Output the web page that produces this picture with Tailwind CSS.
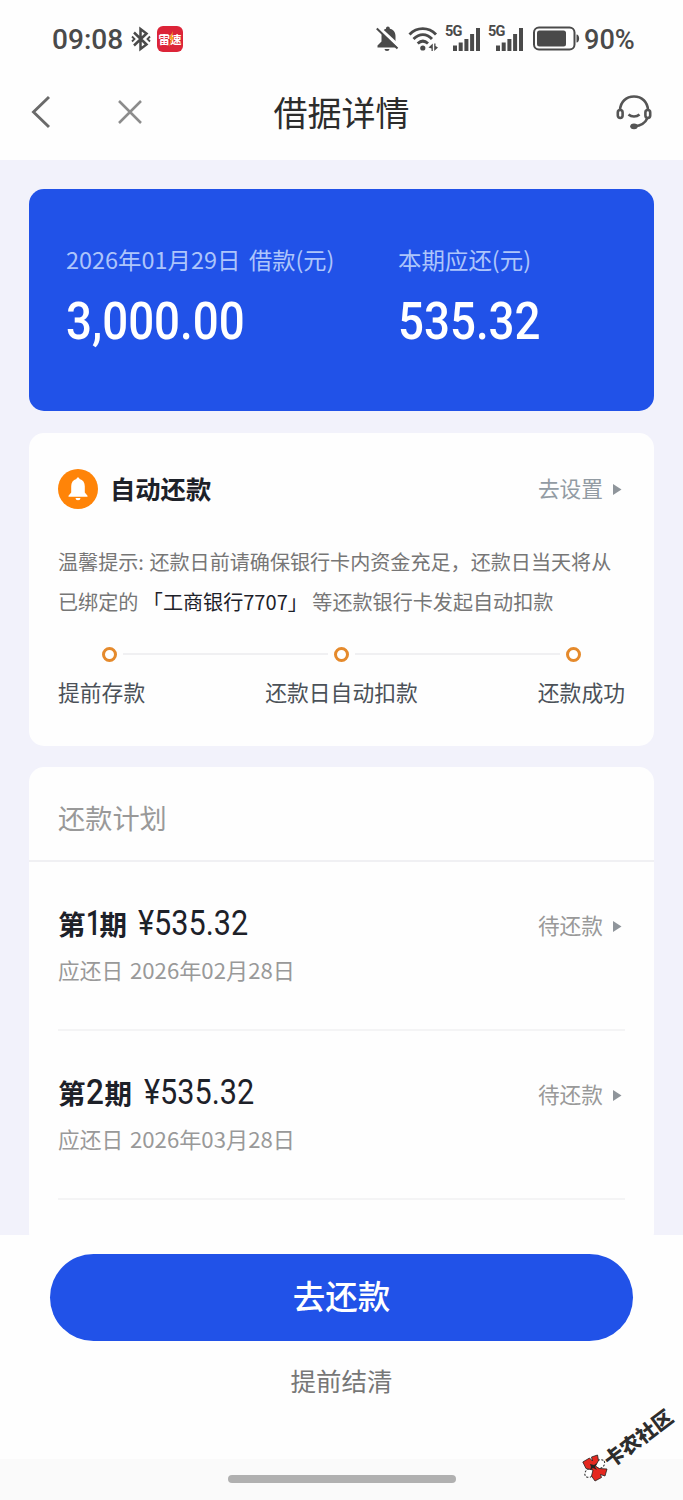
<!DOCTYPE html>
<html lang="zh-CN">
<head>
<meta charset="utf-8">
<title>借据详情</title>
<script src="https://cdn.jsdelivr.net/npm/@tailwindcss/browser@4"></script>
</head>
<body class="w-[683px] h-[1500px] overflow-hidden bg-[#f2f2fb] font-['Noto_Sans_CJK_SC',sans-serif] relative flex flex-col whitespace-nowrap">
<header class="h-[160px] shrink-0 bg-[#fefefe] flex flex-col text-[#4a4a4a]">
  <div class="h-[78px] shrink-0 flex items-center pl-[52px]">
    <span class="w-[79px] h-[30px] leading-[31px] text-[27.5px] font-medium font-['Roboto',sans-serif]"><span class="inline-block origin-left scale-x-[1.02]">09:08</span></span>
    <svg class="w-[20px] h-[26px]" viewBox="0 0 20 26" fill="none" stroke="#4a4a4a" stroke-width="2.5"><path d="M3 6.500 15.500 18.500 9.500 23V3L15.500 7.500 3 19.500"/><path d="M1 10.500l2.500 2.500-2.500 2.500M19 10.500l-2.500 2.500 2.500 2.500" stroke-width="1.800"/></svg>
    <div class="ml-[6px] w-[26px] h-[26px] rounded-[6px] bg-[#dc2438] text-white text-[11.5px] font-bold leading-[26px] flex justify-center relative">雷速
      <svg class="absolute left-[11px] top-[5px] w-[7px] h-[16px]" viewBox="0 0 7 16"><path d="M5 0 1 8h2L1 16 6 6H4z" fill="#f5a623"/></svg>
    </div>
    <svg class="ml-[193px] w-[24px] h-[28px]" viewBox="0 0 24 28"><path d="M1.500 22.500v-2l4-4V11C5.500 7 7.500 4.500 10 3.800V3.300a1.900 1.900 0 0 1 3.800 0v.5C17 4.500 19.500 7 19.500 11v6l2.500 3v2.500z" fill="#4a4a4a"/><path d="M8.500 24h5a2.500 2 0 0 1-5 0z" fill="#4a4a4a"/><path d="M2.500 2.500 23.500 22" stroke="#fefefe" stroke-width="3.500"/><path d="M.8 3.500 21.500 23.500" stroke="#4a4a4a" stroke-width="2"/></svg>
    <svg class="ml-[8px] w-[30px] h-[26px]" viewBox="0 0 30 26" fill="none" stroke="#4a4a4a" stroke-width="2.900"><path d="M1.500 8.500C9 .7 20.500.7 28 8.500"/><path d="M5.500 13C11.500 7.200 18.500 7.200 24 13"/><path d="M9.700 17.500C13 14.500 16.800 14.500 20 17.500"/><circle cx="14.800" cy="22" r="2.600" fill="#4a4a4a" stroke="none"/><path d="M24.800 17.500v7.500h-1.300v-2.500L20.500 21.500zM26.200 25v-7.500h1.300v2.500L30 21.500z" fill="#4a4a4a" stroke="none"/></svg>
    <div class="ml-[7px] w-[37px] h-[26px] relative">
      <span class="absolute left-0 top-[-1px] text-[14.5px] leading-[14px] font-bold font-['Roboto',sans-serif] tracking-[-0.8px]">5G</span>
      <svg class="w-full h-full" viewBox="0 0 37 26" fill="#4a4a4a"><path d="M8 19.500h4V25H8zM13.700 16.500h4V25h-4zM19.400 13h4v12h-4zM25.100 8h4v17h-4zM31 2h4v23h-4z"/></svg>
    </div>
    <div class="ml-[6px] w-[37px] h-[26px] relative">
      <span class="absolute left-0 top-[-1px] text-[14.5px] leading-[14px] font-bold font-['Roboto',sans-serif] tracking-[-0.8px]">5G</span>
      <svg class="w-full h-full" viewBox="0 0 37 26" fill="#4a4a4a"><path d="M8 19.500h4V25H8zM13.700 16.500h4V25h-4zM19.400 13h4v12h-4zM25.100 8h4v17h-4zM31 2h4v23h-4z"/></svg>
    </div>
    <svg class="ml-[8px] w-[48px] h-[26px]" viewBox="0 0 48 26"><rect x="1" y="1.500" width="40.500" height="22" rx="5" fill="none" stroke="#4a4a4a" stroke-width="2"/><rect x="4" y="4.500" width="29" height="16" rx="2.500" fill="#4a4a4a"/><path d="M43.500 8.500c3.500 0 3.500 8 0 8z" fill="#4a4a4a"/></svg>
    <span class="ml-[3px] h-[30px] leading-[31px] text-[27.500px] font-medium font-['Roboto',sans-serif]"><span class="inline-block origin-left scale-x-[0.985]">90%</span></span>
  </div>
  <div class="h-[68px] flex items-center justify-between relative">
    <div class="flex items-center pl-[30px]">
      <svg class="w-[22px] h-[34px]" viewBox="0 0 22 34" fill="none" stroke="#6a6a6a" stroke-width="2.900"><path d="M19 2 3.500 17 19 32"/></svg>
      <svg class="ml-[66px] w-[24px] h-[24px]" viewBox="0 0 24 24" fill="none" stroke="#8c8c8c" stroke-width="2.500"><path d="M1 1l22 22M23 1 1 23"/></svg>
    </div>
    <h1 class="absolute left-0 right-0 text-center text-[34px] leading-[48px] text-[#2c2c2c]">借据详情</h1>
    <svg class="mr-[31px] w-[36px] h-[36px]" viewBox="0 0 36 36" fill="none" stroke="#555" stroke-width="2.600"><path d="M4 16C4.500 8 10 2.500 18 2.500S31.500 8 32 16"/><rect x="1.800" y="16" width="4.800" height="8" rx="2.400"/><rect x="29.400" y="16" width="4.800" height="8" rx="2.400"/><path d="M12.500 20.500c3 2.600 8 2.600 11 0M31.500 24C29 29.500 25 31.800 18.500 32.300"/><ellipse cx="18" cy="32.300" rx="3.800" ry="2.900" fill="#555" stroke="none"/></svg>
  </div>
</header>

<main class="h-[1075px] shrink-0 overflow-hidden px-[29px] pt-[29px] flex flex-col">
  <section class="h-[222px] w-[625px] shrink-0 rounded-[15px] bg-[#2152e8] flex pl-[37px] pt-[53px]">
    <div class="w-[332px]">
      <p class="text-[23px] leading-[34px] text-[#adc5fb] flex"><span class="w-[183px]"><span class="inline-block origin-left scale-x-[1.020]">2026年01月29日</span></span><span class="inline-block origin-left scale-x-[1.010]">借款(元)</span></p>
      <p class="mt-[13px] text-[52.500px] leading-[64px] font-medium text-white font-['Roboto',sans-serif]"><span class="inline-block origin-left scale-x-[0.870]">3,000.00</span></p>
    </div>
    <div>
      <p class="text-[23px] leading-[34px] text-[#adc5fb]"><span class="inline-block origin-left scale-x-[1.020]">本期应还(元)</span></p>
      <p class="mt-[13px] text-[52.500px] leading-[64px] font-medium text-white font-['Roboto',sans-serif]"><span class="inline-block origin-left scale-x-[0.870]">535.32</span></p>
    </div>
  </section>

  <section class="mt-[22px] h-[313px] w-[625px] shrink-0 rounded-[15px] bg-[#fefefe] pt-[36px] px-[29px]">
    <div class="flex items-center h-[40px]">
      <svg class="w-[40px] h-[40px]" viewBox="0 0 40 40"><circle cx="20" cy="20" r="20" fill="#ff8408"/><path d="M20 8.500c.9 0 1.400.6 1.600 1.600 3.400.8 5.200 3.500 5.200 7.200v6.200l2.700 3.300v1H10.500v-1l2.700-3.300v-6.200c0-3.700 1.800-6.400 5.200-7.200.2-1 .7-1.600 1.600-1.600z" fill="#fff"/><path d="M17.500 29h5a2.500 2.200 0 0 1-5 0z" fill="#fff"/></svg>
      <h2 class="ml-[12px] pb-[2px] text-[25.300px] leading-[36px] font-bold text-[#1d2129]">自动还款</h2>
      <span class="ml-auto pb-[2px] text-[21.700px] leading-[30px] text-[#929ba3]">去设置</span>
      <svg class="ml-[10px] mr-[3px] w-[9px] h-[11px]" viewBox="0 0 9 11"><path d="M0 0v11l8.500-5.500z" fill="#8f959b"/></svg>
    </div>
    <p class="mt-[33px] text-[20.080px] leading-[40px] text-[#767676]">温馨提示: <span class="ml-[1px]">还款日前请确保银行卡内资金充足，还款日当天将从</span><br>已绑定的 <span class="text-[#1d2129]">「工商银行7707」</span> 等还款银行卡发起自动扣款</p>
    <div class="mt-[25px] h-[14px] flex items-center pl-[44px] pr-[44px]">
      <i class="w-[15px] h-[15px] rounded-full border-[3px] border-[#e58a2c] bg-white"></i>
      <i class="h-[2px] flex-1 mx-[6px] bg-[#f0f0f2]"></i>
      <i class="w-[15px] h-[15px] rounded-full border-[3px] border-[#e58a2c] bg-white"></i>
      <i class="h-[2px] flex-1 mx-[6px] bg-[#f0f0f2]"></i>
      <i class="w-[15px] h-[15px] rounded-full border-[3px] border-[#e58a2c] bg-white"></i>
    </div>
    <div class="mt-[15px] flex justify-between text-[21.800px] leading-[32px] text-[#4b5158]"><span>提前存款</span><span>还款日自动扣款</span><span>还款成功</span></div>
  </section>

  <section class="mt-[21px] h-[480px] w-[625px] shrink-0 rounded-[15px] bg-[#fefefe]">
    <div class="h-[95px] border-b-2 border-[#f0f0f3] pl-[29px] pt-[31px]"><h2 class="text-[27.200px] leading-[39px] text-[#999]">还款计划</h2></div>
    <div class="mx-[29px] h-[169px] border-b-2 border-[#f4f4f5] flex justify-between pt-[40px]">
      <div>
        <p class="h-[42px] leading-[44px] text-[#1d2129] flex"><span class="w-[80px] flex text-[27.500px] leading-[42px]"><b>第</b><span class="w-[14px] pt-px text-[35px] font-medium font-['Roboto',sans-serif]"><span class="inline-block origin-left scale-x-[0.750]">1</span></span><b>期</b></span><span class="font-['Roboto',sans-serif] text-[35px]"><span class="inline-block origin-left scale-x-[0.875]">¥535.32</span></span></p>
        <p class="mt-[10px] text-[21.700px] leading-[32px] text-[#999] flex"><span class="w-[72px]">应还日</span><span class="inline-block origin-left scale-x-[1.022]">2026年02月28日</span></p>
      </div>
      <div class="flex items-center h-[48px] text-[21.700px] leading-[30px] text-[#999]"><span class="pb-[2px]">待还款</span><svg class="ml-[10px] mr-[3px] w-[9px] h-[11px]" viewBox="0 0 9 11"><path d="M0 0v11l8.500-5.500z" fill="#8f959b"/></svg></div>
    </div>
    <div class="mx-[29px] h-[169px] border-b-2 border-[#f4f4f5] flex justify-between pt-[40px]">
      <div>
        <p class="h-[42px] leading-[44px] text-[#1d2129] flex"><span class="w-[86px] flex text-[27.500px] leading-[42px]"><b>第</b><span class="w-[19px] pt-px text-[35px] font-medium font-['Roboto',sans-serif]"><span class="inline-block origin-left scale-x-[0.900]">2</span></span><b>期</b></span><span class="font-['Roboto',sans-serif] text-[35px]"><span class="inline-block origin-left scale-x-[0.875]">¥535.32</span></span></p>
        <p class="mt-[10px] text-[21.700px] leading-[32px] text-[#999] flex"><span class="w-[72px]">应还日</span><span class="inline-block origin-left scale-x-[1.022]">2026年03月28日</span></p>
      </div>
      <div class="flex items-center h-[48px] text-[21.700px] leading-[30px] text-[#999]"><span class="pb-[2px]">待还款</span><svg class="ml-[10px] mr-[3px] w-[9px] h-[11px]" viewBox="0 0 9 11"><path d="M0 0v11l8.500-5.500z" fill="#8f959b"/></svg></div>
    </div>
  </section>
</main>

<footer class="h-[265px] shrink-0 bg-[#fefefe] flex flex-col items-center pt-[19px]">
  <button class="w-[583px] h-[87px] shrink-0 rounded-full bg-[#2152e8] text-white text-[32.500px] leading-[82px] pb-[5px] font-medium">去还款</button>
  <a class="mt-[20px] h-[38px] text-[25.500px] leading-[38px] text-[#777]">提前结清</a>
  <div class="mt-auto h-[41px] w-full bg-[#fafafa] flex justify-center pt-[16px]"><i class="w-[228px] h-[8px] rounded-full bg-[#b0b0b0]"></i></div>
</footer>

<div class="absolute left-[582px] top-[1453px] w-[28px] h-[30px] flex items-center">
  <svg class="w-[26px] h-[28px] shrink-0" viewBox="0 0 26 28"><ellipse cx="18" cy="10" rx="5" ry="4" transform="rotate(-35 18 10)" fill="#fff" stroke="#222" stroke-dasharray="2 1.500"/><ellipse cx="7.500" cy="19" rx="5" ry="4" transform="rotate(-35 7.500 19)" fill="#fff" stroke="#222" stroke-dasharray="2 1.500"/><path d="M.8 8 7.500 4 10.500 7 9.500 3 15.500 1 16.500 6.500 13.500 12 17 14.500 25 15 23 22 18.500 20.500 19.500 23.500 13 27 9.500 22 11 16 4 14.500z" fill="#e5281f" stroke="#222" stroke-width=".8"/><path d="M8 10l4 1 3-2-2 4 2 3-4-2-3 2 1-3z" fill="#222"/></svg>
</div>
<div class="absolute left-[598px] top-[1424px] w-[80px] h-[28px] flex justify-center items-center -rotate-[37deg] text-[20px] leading-[28px] font-black text-[#2d2d2d]">卡农社区</div>
</body>
</html>
